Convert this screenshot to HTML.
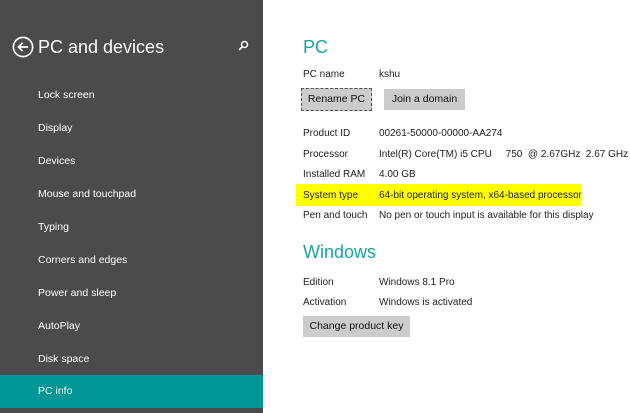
<!DOCTYPE html><html><head><style>
body{margin:0;width:630px;height:413px;overflow:hidden;background:#fff;font-family:"Liberation Sans",sans-serif;position:relative}
.sb{position:absolute;left:0;top:0;width:263px;height:413px;background:#4b4b4b}
.t{position:absolute;white-space:nowrap}
.m{position:absolute;left:38px;color:#fff;font-size:10.5px;white-space:nowrap}
.sel{position:absolute;left:0;top:375px;width:263px;height:33px;background:#009696}
.l{position:absolute;left:303px;font-size:10px;color:#222;white-space:nowrap}
.v{position:absolute;left:379px;font-size:10px;color:#222;white-space:nowrap}
.btn{position:absolute;background:#ccc;font-size:10.5px;color:#111;text-align:center;line-height:21px;height:21px;white-space:nowrap;box-sizing:border-box}
.h{position:absolute;color:#1aa3a3;font-size:18px;white-space:nowrap}
</style></head><body>
<div class="sb"></div><div class="sel"></div>
<svg style="position:absolute;left:12px;top:36px" width="22" height="22" viewBox="0 0 24 24"><circle cx="12" cy="12" r="10.5" fill="none" stroke="#fff" stroke-width="1.8"/><path d="M17.5 12H7M11.5 7.5L7 12l4.5 4.5" fill="none" stroke="#fff" stroke-width="1.8"/></svg>
<div class="t" style="left:38px;top:37px;color:#fff;font-size:18px">PC and devices</div>
<svg style="position:absolute;left:238px;top:40px" width="11" height="11" viewBox="0 0 11 11"><circle cx="6.5" cy="4.5" r="3" fill="none" stroke="#fff" stroke-width="1.5"/><path d="M4.5 6.5L1 10" stroke="#fff" stroke-width="1.8"/></svg>
<div class="m" style="top:89px">Lock screen</div>
<div class="m" style="top:122px">Display</div>
<div class="m" style="top:155px">Devices</div>
<div class="m" style="top:188px">Mouse and touchpad</div>
<div class="m" style="top:221px">Typing</div>
<div class="m" style="top:254px">Corners and edges</div>
<div class="m" style="top:287px">Power and sleep</div>
<div class="m" style="top:320px">AutoPlay</div>
<div class="m" style="top:353px">Disk space</div>
<div class="m" style="top:385px">PC info</div>
<div class="h" style="left:303px;top:37px">PC</div>
<div class="l" style="top:69px">PC name</div><div class="v" style="top:69px">kshu</div>
<div class="btn" style="left:301px;top:88px;width:71px;border:1px dashed #555;height:23px;line-height:21px">Rename PC</div>
<div class="btn" style="left:384px;top:89px;width:81px">Join a domain</div>
<div style="position:absolute;left:296px;top:184px;width:285px;height:22px;background:#ffff00"></div>
<div class="l" style="top:128px">Product ID</div><div class="v" style="top:128px">00261-50000-00000-AA274</div>
<div class="l" style="top:149px">Processor</div><div class="v" style="top:149px">Intel(R) Core(TM) i5 CPU &nbsp; &nbsp; 750 &nbsp;@ 2.67GHz &nbsp;2.67 GHz</div>
<div class="l" style="top:169px">Installed RAM</div><div class="v" style="top:169px">4.00 GB</div>
<div class="l" style="top:190px">System type</div><div class="v" style="top:190px">64-bit operating system, x64-based processor</div>
<div class="l" style="top:210px">Pen and touch</div><div class="v" style="top:210px">No pen or touch input is available for this display</div>
<div class="h" style="left:303px;top:242px">Windows</div>
<div class="l" style="top:277px">Edition</div><div class="v" style="top:277px">Windows 8.1 Pro</div>
<div class="l" style="top:297px">Activation</div><div class="v" style="top:297px">Windows is activated</div>
<div class="btn" style="left:303px;top:316px;width:107px">Change product key</div>
</body></html>
